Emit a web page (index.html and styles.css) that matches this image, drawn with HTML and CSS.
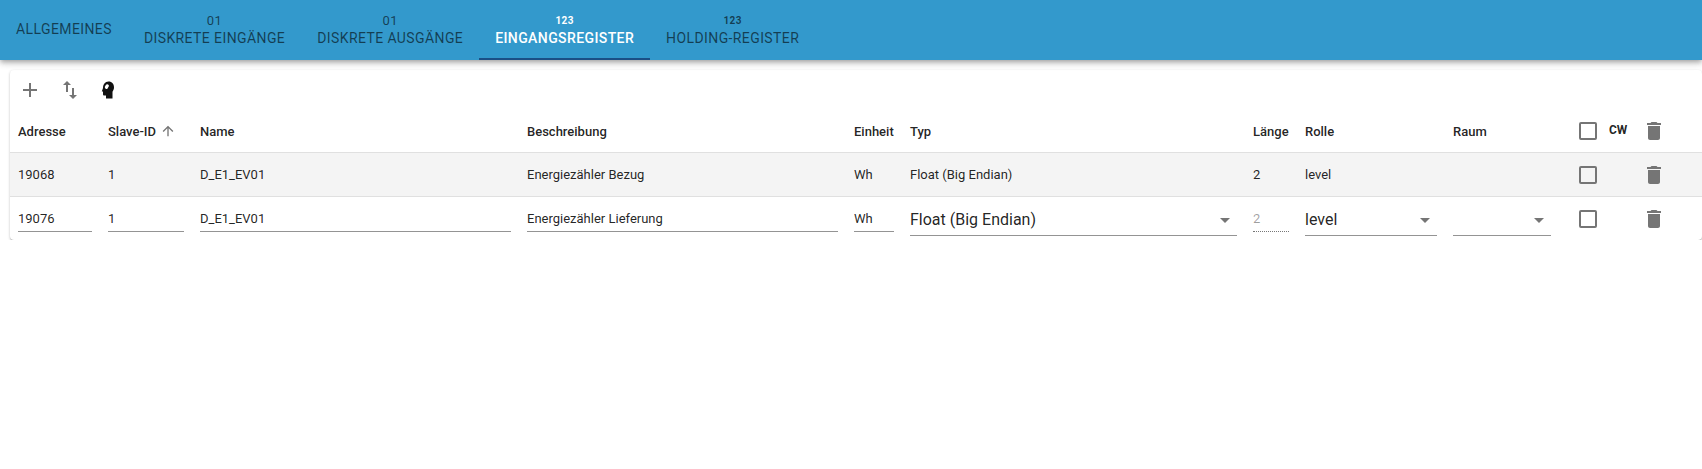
FILE: index.html
```html
<!DOCTYPE html>
<html lang="de">
<head>
    <meta charset="UTF-8">
    <meta name="viewport" content="width=device-width, initial-scale=1.0">
    <title>Modbus Register</title>
    <link rel="stylesheet" href="styles.css">
</head>
<body>
    <header class="tabbar">
        <div class="tab tab-plain"><span>Allgemeines</span></div>
        <div class="tab"><span class="tab-icon">01</span><span>Diskrete Eingänge</span></div>
        <div class="tab"><span class="tab-icon">01</span><span>Diskrete Ausgänge</span></div>
        <div class="tab tab-active"><span class="tab-icon tab-icon-bold">123</span><span>Eingangsregister</span></div>
        <div class="tab"><span class="tab-icon tab-icon-bold">123</span><span>Holding-Register</span></div>
    </header>

    <div class="paper">
        <div class="toolbar">
            <svg class="tool tool-grey" viewBox="0 0 24 24"><path d="M19 13h-6v6h-2v-6H5v-2h6V5h2v6h6v2z"/></svg>
            <svg class="tool tool-grey" viewBox="0 0 24 24"><path d="M9 3 5 7h3v7h2V7h3L9 3zm7 14v-7h-2v7h-3l4 4 4-4h-3z"/></svg>
            <svg class="tool tool-head" viewBox="0 0 24 24"><path fill-rule="evenodd" d="M12.5 3.5c3.600 0 5.500 2.700 5.500 5.700 0 2-.8 3.300-1.500 4.500v6.800H10v-3H8.300c-.8 0-1.300-.5-1.300-1.300v-2.700H5.800l1.200-3.500C7 6.500 9 3.500 12.500 3.500zM9.500 7.800a1.700 1.700 0 1 0 2.700 1.500 1.700 1.700 0 1 0-2.700-1.500z"/></svg>
        </div>

        <table class="grid">
            <colgroup>
                <col class="c-addr"><col class="c-slave"><col class="c-name"><col class="c-desc"><col class="c-unit"><col class="c-type"><col class="c-len"><col class="c-role"><col class="c-room"><col class="c-check"><col class="c-del">
            </colgroup>
            <thead>
                <tr>
                    <th>Adresse</th>
                    <th>Slave-ID <svg class="sort" viewBox="0 0 24 24"><path d="m4 12 1.410 1.410L11 7.830V20h2V7.830l5.580 5.590L20 12l-8-8-8 8z"/></svg></th>
                    <th>Name</th>
                    <th>Beschreibung</th>
                    <th>Einheit</th>
                    <th>Typ</th>
                    <th>Länge</th>
                    <th>Rolle</th>
                    <th>Raum</th>
                    <th class="cell-check"><div class="check-wrap"><span class="box"></span><span class="cw">CW</span></div></th>
                    <th class="cell-del"><svg class="trash" viewBox="0 0 24 24"><path d="M6 19c0 1.100.9 2 2 2h8c1.100 0 2-.9 2-2V7H6v12zM19 4h-3.500l-1-1h-5l-1 1H5v2h14V4z"/></svg></th>
                </tr>
            </thead>
            <tbody>
                <tr class="row-shaded">
                    <td>19068</td>
                    <td>1</td>
                    <td>D_E1_EV01</td>
                    <td>Energiezähler Bezug</td>
                    <td>Wh</td>
                    <td>Float (Big Endian)</td>
                    <td>2</td>
                    <td>level</td>
                    <td></td>
                    <td class="cell-check"><div class="check-wrap"><span class="box"></span></div></td>
                    <td class="cell-del"><svg class="trash" viewBox="0 0 24 24"><path d="M6 19c0 1.100.9 2 2 2h8c1.100 0 2-.9 2-2V7H6v12zM19 4h-3.500l-1-1h-5l-1 1H5v2h14V4z"/></svg></td>
                </tr>
                <tr class="row-edit">
                    <td><div class="field">19076</div></td>
                    <td><div class="field">1</div></td>
                    <td><div class="field">D_E1_EV01</div></td>
                    <td><div class="field">Energiezähler Lieferung</div></td>
                    <td><div class="field">Wh</div></td>
                    <td><div class="select">Float (Big Endian)<span class="caret"></span></div></td>
                    <td><div class="field field-off">2</div></td>
                    <td><div class="select">level<span class="caret"></span></div></td>
                    <td><div class="select"><span class="caret"></span></div></td>
                    <td class="cell-check"><div class="check-wrap"><span class="box"></span></div></td>
                    <td class="cell-del"><svg class="trash" viewBox="0 0 24 24"><path d="M6 19c0 1.100.9 2 2 2h8c1.100 0 2-.9 2-2V7H6v12zM19 4h-3.500l-1-1h-5l-1 1H5v2h14V4z"/></svg></td>
                </tr>
            </tbody>
        </table>
    </div>
</body>
</html>
```

FILE: styles.css
```css
html, body {
    overflow: hidden;
}

body {
    margin: 0;
    background-color: #fff;
    color: rgba(0, 0, 0, 0.87);
    font-family: Roboto, "Liberation Sans", sans-serif;
}

.tabbar {
    display: flex;
    height: 60px;
    background-color: #3399cc;
    box-shadow: 0 2px 4px -1px rgba(0,0,0,0.2), 0 4px 5px 0 rgba(0,0,0,0.14), 0 1px 10px 0 rgba(0,0,0,0.12);
    position: relative;
}

.tab {
    display: flex;
    flex-direction: column;
    justify-content: flex-end;
    align-items: center;
    box-sizing: border-box;
    height: 60px;
    padding: 0 16px 13px;
    font-size: 14px;
    letter-spacing: 0.4px;
    line-height: 18px;
    text-transform: uppercase;
    color: rgba(0, 0, 0, 0.6);
}

.tab-plain {
    justify-content: center;
    padding-bottom: 3px;
}

.tab-active {
    color: #fff;
    font-weight: 500;
    border-bottom: 2px solid #1a4f85;
    padding-bottom: 11px;
}

.tab-icon {
    font-size: 13px;
    line-height: 14px;
    margin-bottom: 1px;
}

.tab-icon-bold {
    font-size: 10px;
    font-weight: 700;
}

.paper {
    margin: 10px 0 0 10px;
    background-color: #fff;
    border-radius: 4px;
    box-shadow: 0 1px 3px 0 rgba(0,0,0,0.2), 0 1px 1px 0 rgba(0,0,0,0.14), 0 2px 1px -1px rgba(0,0,0,0.12);
}

.toolbar {
    display: flex;
    align-items: center;
    gap: 16px;
    height: 40px;
    padding-left: 8px;
}

.tool {
    width: 24px;
    height: 24px;
}

.tool-grey {
    fill: #757575;
}

.tool-head {
    fill: #111;
    margin-left: -2px;
}

.grid {
    width: 100%;
    table-layout: fixed;
    border-collapse: collapse;
    font-size: 13px;
}

.c-addr { width: 90px; }
.c-slave { width: 92px; }
.c-name { width: 327px; }
.c-desc { width: 327px; }
.c-unit { width: 56px; }
.c-type { width: 343px; }
.c-len { width: 52px; }
.c-role { width: 148px; }
.c-room { width: 114px; }
.c-check { width: 73px; }

th, td {
    padding: 0 8px;
    text-align: left;
    white-space: nowrap;
}

th {
    height: 42px;
    font-size: 13px;
    font-weight: 500;
    border-bottom: 1px solid #e0e0e0;
}

td {
    height: 43px;
    border-bottom: 1px solid #e0e0e0;
}

.row-shaded {
    background-color: #f4f4f4;
}

.row-edit td {
    border-bottom: none;
}

.sort {
    width: 16px;
    height: 16px;
    fill: #757575;
    vertical-align: -3px;
    margin-left: 1px;
}

.field {
    box-sizing: border-box;
    height: 25px;
    margin-top: 2px;
    line-height: 24px;
    border-bottom: 1px solid #949494;
}

.field-off {
    color: rgba(0, 0, 0, 0.38);
    border-bottom: 1px dotted #777;
}

.select {
    position: relative;
    box-sizing: border-box;
    height: 29px;
    margin-top: 6px;
    line-height: 26px;
    font-size: 16px;
    border-bottom: 1px solid #949494;
}

.caret {
    position: absolute;
    right: 7px;
    top: 11px;
    width: 0;
    height: 0;
    border-left: 5px solid transparent;
    border-right: 5px solid transparent;
    border-top: 5px solid #757575;
}

.cell-check {
    padding: 0 0 0 20px;
}

.check-wrap {
    display: flex;
    align-items: center;
    gap: 12px;
}

.box {
    box-sizing: border-box;
    width: 18px;
    height: 18px;
    border: 2px solid #757575;
    border-radius: 2px;
}

.cw {
    font-size: 12px;
    font-weight: 700;
    margin-top: -2px;
}

.cell-del {
    padding: 0 0 0 10px;
}

.trash {
    display: block;
    width: 24px;
    height: 24px;
    fill: #757575;
}
```
